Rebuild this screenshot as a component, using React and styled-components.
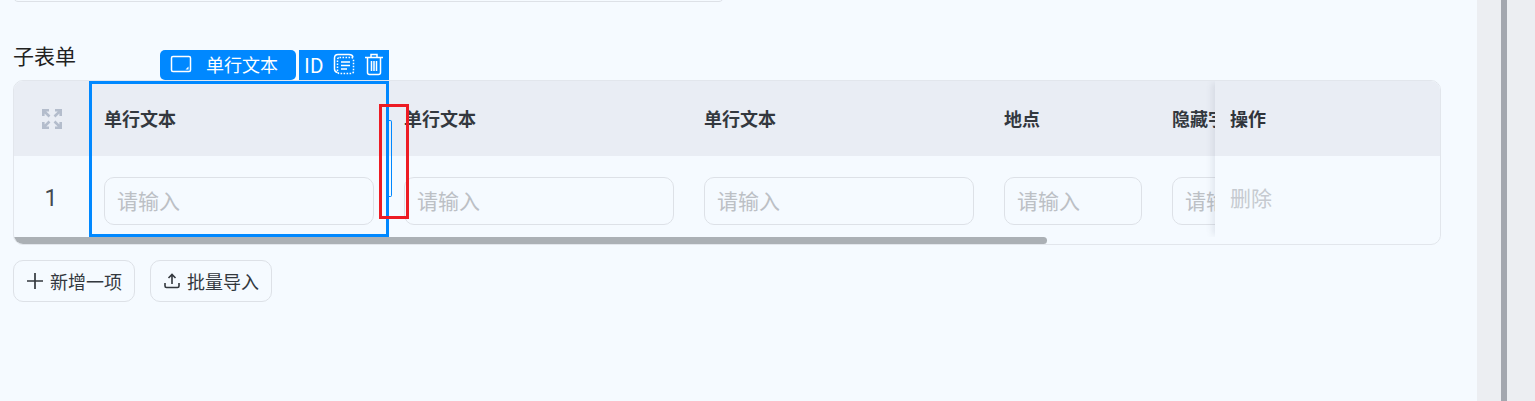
import styled, { createGlobalStyle } from "styled-components";

const GlobalStyle = createGlobalStyle`
  html, body {
    margin: 0;
    padding: 0;
    height: 100%;
    overflow: hidden;
    background: #f5faff;
    font-family: "Noto Sans CJK SC", "Noto Sans", sans-serif;
  }
`;

const BLUE = "#0088ff";
const COLUMNS = "76px 300px 300px 300px 168px 300px";

const Page = styled.div`
  display: flex;
  height: 401px;
  width: 1535px;
  overflow: hidden;
`;

const Main = styled.main`
  width: 1477px;
  padding-left: 13px;
  box-sizing: border-box;
`;

const Gutter = styled.aside`
  width: 58px;
  background: #eceef2;
  padding-left: 24px;
  box-sizing: border-box;
`;

const GutterLine = styled.div`
  width: 6px;
  height: 100%;
  background: #a3a7af;
`;

const TopField = styled.div`
  width: 711px;
  height: 10px;
  margin-top: -8px;
  box-sizing: border-box;
  border: 1px solid #dde1e7;
  border-radius: 8px;
`;

const SectionTitle = styled.div`
  margin-top: 39px;
  height: 39px;
  font-size: 21px;
  line-height: 28px;
  color: #222;
`;

const TableSection = styled.section`
  position: relative;
  width: 1428px;
`;

const TableCard = styled.div`
  position: relative;
  height: 165px;
  box-sizing: border-box;
  border: 1px solid #e2e6ec;
  border-radius: 10px;
  overflow: hidden;
`;

const Rows = styled.div`
  width: 1444px;
  margin-left: -1px;
`;

const HeadRow = styled.div`
  display: grid;
  grid-template-columns: ${COLUMNS};
  height: 75px;
  background: #e9edf4;
  align-items: center;
  white-space: nowrap;
`;

const BodyRow = styled.div`
  display: grid;
  grid-template-columns: ${COLUMNS};
  height: 89px;
`;

const IndexCell = styled.div`
  display: flex;
  align-items: center;
  justify-content: center;
  font-family: Roboto, sans-serif;
  font-size: 23px;
  color: #444a50;
  padding-left: ${(props) => (props.$body ? "0" : "1px")};
  padding-bottom: ${(props) => (props.$body ? "5px" : "0")};
`;

const HeadCell = styled.div`
  padding: 0 0 2px 15px;
  font-size: 18px;
  font-weight: 700;
  color: #33383e;
  overflow: hidden;
`;

const InputCell = styled.div`
  padding: 21px 15px 0;
`;

const FakeInput = styled.div`
  height: 48px;
  box-sizing: border-box;
  border: 1px solid #dde1e7;
  border-radius: 10px;
  padding-left: 12px;
  font-size: 21px;
  line-height: 45px;
  color: #bcc0c5;
  white-space: nowrap;
  overflow: hidden;
`;

const ActionColumn = styled.div`
  position: absolute;
  top: 0;
  right: 0;
  width: 225px;
  height: 156px;
  background: #f5faff;
  box-shadow: -5px 0 6px -2px rgba(90, 100, 120, 0.12);
  clip-path: inset(0 0 0 -12px);
`;

const ActionHead = styled.div`
  height: 73px;
  display: flex;
  align-items: center;
  padding: 0 0 2px 15px;
  background: #e9edf4;
  font-size: 18px;
  font-weight: 700;
  color: #2f343a;
`;

const ActionBody = styled.div`
  padding: 25px 0 0 15px;
  font-size: 21px;
  line-height: 32px;
  color: #c6cad0;
`;

const ScrollThumb = styled.div`
  position: absolute;
  left: 0;
  bottom: 0;
  width: 1033px;
  height: 7px;
  background: #abb0b5;
  border-radius: 0 4px 4px 4px;
`;

const Selection = styled.div`
  position: absolute;
  top: 1px;
  left: 76px;
  width: 300px;
  height: 156px;
  box-sizing: border-box;
  border: 3px solid ${BLUE};
`;

const SelectionBar = styled.div`
  position: absolute;
  left: 68px;
  right: -3px;
  bottom: 100%;
  margin-bottom: 4px;
  display: flex;
  gap: 3px;
  height: 30px;
`;

const TypeBadge = styled.div`
  width: 136px;
  display: flex;
  align-items: center;
  gap: 14px;
  padding: 0 0 2px 10px;
  box-sizing: border-box;
  background: ${BLUE};
  border-radius: 5px;
  color: #fff;
  font-size: 18px;
`;

const Tools = styled.div`
  flex: 1;
  display: flex;
  align-items: center;
  padding: 0 0 2px 5px;
  gap: 9px;
  background: ${BLUE};
  color: #fff;
  font-size: 20px;
`;

const ResizeGrip = styled.div`
  position: absolute;
  top: 36px;
  right: -6px;
  width: 3px;
  height: 77px;
  box-sizing: border-box;
  border: 1px solid ${BLUE};
  border-left: none;
  border-radius: 0 2px 2px 0;
`;

const ResizeHit = styled.div`
  position: absolute;
  top: 20px;
  right: -23px;
  width: 30px;
  height: 115px;
  box-sizing: border-box;
  border: 3px solid #ed1c24;
`;

const Actions = styled.div`
  display: flex;
  gap: 15px;
  margin-top: 15px;
`;

const Button = styled.button`
  height: 42px;
  width: 122px;
  display: flex;
  align-items: center;
  gap: 7px;
  padding: 0 0 0 13px;
  background: transparent;
  border: 1px solid #dde1e7;
  border-radius: 10px;
  font-family: inherit;
  font-size: 18px;
  color: #33383e;
`;

const FieldIcon = () => (
  <svg width="22" height="18" viewBox="0 0 22 18" fill="none" stroke="#fff" strokeWidth="1.5">
    <rect x="1.5" y="1.5" width="19" height="15" rx="1.5" />
    <path d="M18.500 14.500h-3l3-3z" fill="#fff" stroke="none" />
  </svg>
);

const ListIcon = () => (
  <svg width="22" height="22" viewBox="0 0 22 22" fill="none" stroke="#fff" strokeWidth="1.5">
    <path d="M4.500 19.500C2.500 19 1.500 18 1.500 16V5c0-2 1-3.500 3.500-3.500h11c2 0 3.500 .5 4 2.500" />
    <rect x="4.500" y="4.500" width="16" height="16" rx="2" strokeDasharray="1.6 1.4" />
    <path d="M8 9h9M8 12.500h9M8 16h6" />
  </svg>
);

const TrashIcon = () => (
  <svg width="20" height="24" viewBox="0 0 20 24" fill="none" stroke="#fff" strokeWidth="1.5">
    <path d="M1 5.500h18M7 5V2.500h6V5" />
    <path d="M3.500 5.500v15c0 1.500 1 2 2 2h9c1 0 2-.5 2-2v-15" />
    <path d="M7.500 9v10M10 9v10M12.500 9v10" />
  </svg>
);

const ExpandIcon = () => (
  <svg width="20" height="20" viewBox="0 0 20 20" fill="none" stroke="#b4bdcc" strokeWidth="2.6">
    <path d="M1.300 7V1.300H7M1.800 1.800L7.500 7.500" />
    <path d="M18.700 7V1.300H13M18.200 1.800L12.500 7.500" />
    <path d="M1.300 13v5.700H7M1.800 18.200l5.700-5.700" />
    <path d="M18.700 13v5.700H13M18.200 18.200l-5.700-5.700" />
  </svg>
);

const PlusIcon = () => (
  <svg width="16" height="16" viewBox="0 0 16 16" stroke="#33383e" strokeWidth="1.7">
    <path d="M8 0v16M0 8h16" />
  </svg>
);

const UploadIcon = () => (
  <svg width="16" height="16" viewBox="0 0 16 16" fill="none" stroke="#33383e" strokeWidth="1.6">
    <path d="M8 11V2M4.500 5L8 1.500 11.500 5" />
    <path d="M1 10v3c0 1 .6 1.500 1.500 1.500h11c.9 0 1.500-.5 1.500-1.500v-3" />
  </svg>
);

const columns = [
  { title: "单行文本" },
  { title: "单行文本" },
  { title: "单行文本" },
  { title: "地点" },
  { title: "隐藏字段" },
];

export default function App() {
  return (
    <Page>
      <GlobalStyle />
      <Main>
        <TopField />
        <SectionTitle>子表单</SectionTitle>
        <TableSection>
          <TableCard>
            <Rows>
              <HeadRow>
                <IndexCell>
                  <ExpandIcon />
                </IndexCell>
                {columns.map((col, i) => (
                  <HeadCell key={i}>{col.title}</HeadCell>
                ))}
              </HeadRow>
              <BodyRow>
                <IndexCell $body>1</IndexCell>
                {columns.map((col, i) => (
                  <InputCell key={i}>
                    <FakeInput>请输入</FakeInput>
                  </InputCell>
                ))}
              </BodyRow>
            </Rows>
            <ActionColumn>
              <ActionHead>操作</ActionHead>
              <ActionBody>删除</ActionBody>
            </ActionColumn>
            <ScrollThumb />
          </TableCard>
          <Selection>
            <SelectionBar>
              <TypeBadge>
                <FieldIcon />
                单行文本
              </TypeBadge>
              <Tools>
                ID
                <ListIcon />
                <TrashIcon />
              </Tools>
            </SelectionBar>
            <ResizeGrip />
            <ResizeHit />
          </Selection>
        </TableSection>
        <Actions>
          <Button>
            <PlusIcon />
            新增一项
          </Button>
          <Button>
            <UploadIcon />
            批量导入
          </Button>
        </Actions>
      </Main>
      <Gutter>
        <GutterLine />
      </Gutter>
    </Page>
  );
}
